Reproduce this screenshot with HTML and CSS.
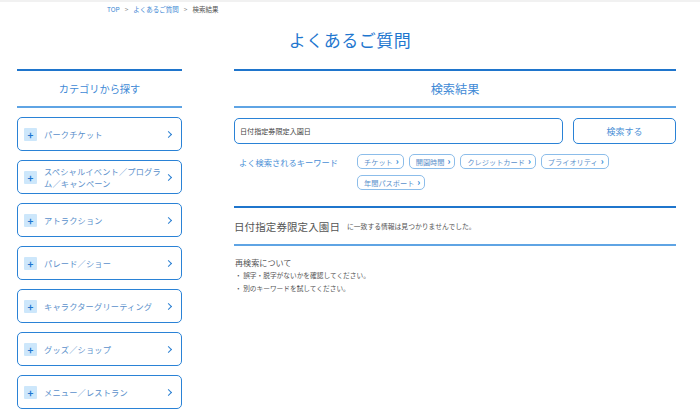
FILE: index.html
```html
<!DOCTYPE html>
<html lang="ja">
<head>
<meta charset="utf-8">
<title>よくあるご質問 検索結果</title>
<link rel="stylesheet" href="styles.css">
</head>
<body>
<div class="topbar"></div>
<nav class="crumbs">
  <a class="crumb-link">TOP</a><span class="sep">&gt;</span><a class="crumb-link">よくあるご質問</a><span class="sep">&gt;</span><span class="crumb-current">検索結果</span>
</nav>
<h1 class="page-title">よくあるご質問</h1>
<div class="layout">
  <aside class="side">
    <h2 class="sec-head sec-head-side">カテゴリから探す</h2>
    <ul class="cat-list">
      <li class="cat"><span class="plus">+</span><span class="cat-text">パークチケット</span><span class="chev"></span></li>
      <li class="cat"><span class="plus">+</span><span class="cat-text">スペシャルイベント／プログラ<br>ム／キャンペーン</span><span class="chev"></span></li>
      <li class="cat"><span class="plus">+</span><span class="cat-text">アトラクション</span><span class="chev"></span></li>
      <li class="cat"><span class="plus">+</span><span class="cat-text">パレード／ショー</span><span class="chev"></span></li>
      <li class="cat"><span class="plus">+</span><span class="cat-text">キャラクターグリーティング</span><span class="chev"></span></li>
      <li class="cat"><span class="plus">+</span><span class="cat-text">グッズ／ショップ</span><span class="chev"></span></li>
      <li class="cat"><span class="plus">+</span><span class="cat-text">メニュー／レストラン</span><span class="chev"></span></li>
    </ul>
  </aside>
  <main class="main">
    <h2 class="sec-head sec-head-main">検索結果</h2>
    <div class="search-row">
      <div class="search-input">日付指定券限定入園日</div>
      <div class="search-btn">検索する</div>
    </div>
    <div class="kw-row">
      <div class="kw-label">よく検索されるキーワード</div>
      <div class="kw-tags">
        <span class="tag">チケット<span class="tag-chev">›</span></span>
        <span class="tag">開園時間<span class="tag-chev">›</span></span>
        <span class="tag">クレジットカード<span class="tag-chev">›</span></span>
        <span class="tag">プライオリティ<span class="tag-chev">›</span></span>
        <span class="tag">年間パスポート<span class="tag-chev">›</span></span>
      </div>
    </div>
    <div class="result-head">
      <span class="result-word">日付指定券限定入園日</span><span class="result-msg">に一致する情報は見つかりませんでした。</span>
    </div>
    <div class="retry">
      <p class="retry-title">再検索について</p>
      <p class="retry-item">・ 誤字・脱字がないかを確認してください。</p>
      <p class="retry-item">・ 別のキーワードを試してください。</p>
    </div>
  </main>
</div>
</body>
</html>
```
FILE: styles.css
```css
* { box-sizing: border-box; }
html, body { margin: 0; padding: 0; background: #fff; }
body {
  font-family: "Noto Sans CJK JP", "Noto Sans", sans-serif;
  color: #555;
  width: 700px;
  height: 414px;
  overflow: hidden;
}
.topbar { height: 2px; background: #f1f1f1; }
.crumbs {
  height: 14px;
  padding-left: 107px;
  font-size: 6.5px;
  line-height: 14px;
  display: flex;
  align-items: center;
}
.crumb-link { color: #3a86d3; }
.crumb-current { color: #555; }
.sep { color: #888; margin: 0 5px; }
.page-title {
  margin: 10px 0 0;
  height: 43px;
  text-align: center;
  font-size: 17px;
  font-weight: 400;
  line-height: 28px;
  color: #1f77cf;
  letter-spacing: 0.5px;
}
.layout {
  display: flex;
  gap: 52px;
  padding-left: 17px;
}
.side { width: 165px; flex: none; }
.main { width: 442px; flex: none; }
.sec-head {
  margin: 0;
  height: 39px;
  border-top: 2px solid #1f75cc;
  border-bottom: 2px solid #5fa4e4;
  text-align: center;
  font-weight: 400;
  color: #3f8ad6;
  display: flex;
  align-items: center;
  justify-content: center;
}
.sec-head-side { font-size: 10.2px; }
.sec-head-main { font-size: 12.2px; }
.cat-list {
  list-style: none;
  margin: 9px 0 0;
  padding: 0;
  display: flex;
  flex-direction: column;
  gap: 9px;
}
.cat {
  height: 34px;
  border: 1.5px solid #2a82d6;
  border-radius: 5px;
  display: flex;
  align-items: center;
  padding: 0 6px 0 6px;
}
.plus {
  width: 13px;
  height: 13px;
  flex: none;
  background: #cde7fb;
  color: #1f77cf;
  font-size: 10px;
  font-weight: 700;
  line-height: 13px;
  text-align: center;
  border-radius: 1px;
}
.cat-text {
  flex: 1;
  margin-left: 7px;
  font-size: 8.2px;
  line-height: 12px;
  color: #5b90cb;
  padding-right: 4px;
  letter-spacing: 0.2px;
}
.chev {
  width: 5px;
  height: 5px;
  flex: none;
  border-top: 1.5px solid #2a7fd2;
  border-right: 1.5px solid #2a7fd2;
  transform: rotate(45deg);
  margin-right: 4px;
}
.search-row {
  display: flex;
  gap: 10px;
  margin-top: 10px;
}
.search-input {
  width: 329px;
  height: 26px;
  border: 1.5px solid #2a82d6;
  border-radius: 5px;
  font-size: 7.1px;
  color: #444;
  display: flex;
  align-items: center;
  padding-left: 5px;
}
.search-btn {
  flex: 1;
  height: 26px;
  border: 1.5px solid #2a82d6;
  border-radius: 5px;
  font-size: 9px;
  color: #4a8fd6;
  display: flex;
  align-items: center;
  justify-content: center;
}
.kw-row {
  display: flex;
  margin-top: 10px;
}
.kw-label {
  width: 123px;
  flex: none;
  padding-left: 5px;
  padding-top: 3px;
  font-size: 8.25px;
  line-height: 10px;
  color: #4a8fd6;
}
.kw-tags {
  width: 260px;
  display: flex;
  flex-wrap: wrap;
  gap: 6px 5px;
}
.tag {
  height: 15px;
  border: 1px solid #8cbdea;
  border-radius: 5px;
  font-size: 7.2px;
  color: #5b90cb;
  display: inline-flex;
  align-items: center;
  padding: 0 4px 0 6px;
}
.tag-chev {
  font-weight: 700;
  font-size: 9px;
  color: #2a7fd2;
  margin-left: 3px;
  line-height: 10px;
}
.result-head {
  margin-top: 16px;
  height: 40px;
  border-top: 2px solid #1f75cc;
  border-bottom: 2px solid #5fa4e4;
  display: flex;
  align-items: center;
}
.result-word {
  font-size: 10.5px;
  color: #555;
  letter-spacing: 0.1px;
}
.result-msg {
  font-size: 6.8px;
  color: #555;
  margin-left: 7px;
}
.retry { padding-left: 1px; margin-top: 11px; }
.retry-title {
  margin: 0;
  font-size: 8.1px;
  line-height: 12px;
  color: #555;
}
.retry-item {
  margin: 0;
  font-size: 6.7px;
  line-height: 12.5px;
  color: #555;
}
```
